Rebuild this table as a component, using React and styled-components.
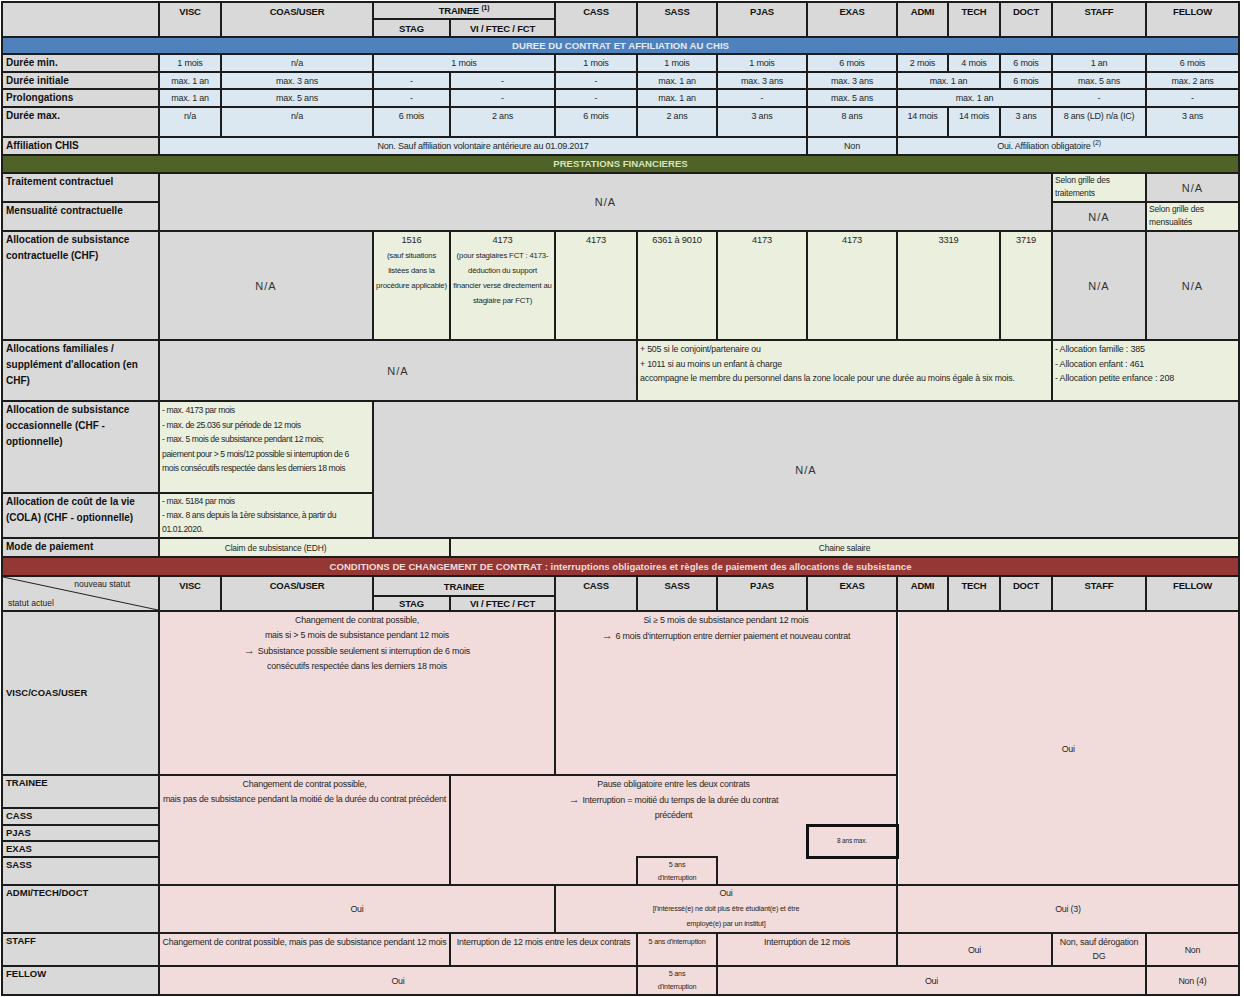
import React from "react";
import styled, { createGlobalStyle } from "styled-components";

const LINE = "#1c1c1c";

const FILL = {
  head: "#d9d9d9",
  blue: "#dbe8f2",
  green: "#ebf0de",
  gray: "#d9d9d9",
  pink: "#f2dcdb",
};

const WIDTHS = [157, 62, 152, 77, 105, 82, 80, 90, 90, 51, 52, 52, 94, 93];

const GlobalStyle = createGlobalStyle`
  html, body { margin: 0; padding: 0; background: #ffffff; }
  body { font-family: "Liberation Sans", Arial, sans-serif; color: #262626; }
`;

const Page = styled.div`
  padding: 1px 0 0 1px;
`;

const Sheet = styled.table`
  border-collapse: collapse;
  table-layout: fixed;
  width: ${WIDTHS.reduce((a, b) => a + b, 0)}px;
`;

const Row = styled.tr`
  height: ${(p) => p.$h}px;
`;

// open sides ("top", or "right:1" for a thinner one) are drawn in the fill colour
// so that merged areas read as one block
const openSides = (p) =>
  (p.$open || [])
    .map((entry) => {
      const [side, width] = entry.split(":");
      return `border-${side}: ${width || 2}px solid ${FILL[p.$bg || "blue"]};`;
    })
    .join("\n");

const Cell = styled.td`
  border: 2px solid ${LINE};
  background: ${(p) => FILL[p.$bg || "blue"]};
  text-align: ${(p) => p.$align || "center"};
  vertical-align: ${(p) => p.$valign || "top"};
  font-size: ${(p) => p.$size || 9}px;
  line-height: ${(p) => p.$lh || 14}px;
  letter-spacing: ${(p) => (p.$tight ? "-0.4px" : "-0.2px")};
  padding: ${(p) => p.$pt ?? 1}px ${(p) => p.$pr ?? 2}px 0 2px;
  white-space: nowrap;
  overflow: hidden;
  ${openSides}
  ${(p) => (p.$box ? `border: 3px solid #111;` : "")}
`;

const Label = styled.th`
  border: 2px solid ${LINE};
  background: ${FILL.head};
  text-align: left;
  vertical-align: ${(p) => p.$valign || "top"};
  font-size: ${(p) => p.$size || 10}px;
  font-weight: bold;
  line-height: ${(p) => p.$lh || 16}px;
  padding: 0 3px;
  color: #111;
  white-space: nowrap;
`;

const Head = styled.th`
  border: 2px solid ${LINE};
  background: ${FILL.head};
  font-size: 9.5px;
  font-weight: bold;
  letter-spacing: -0.2px;
  line-height: 13px;
  vertical-align: ${(p) => p.$valign || "top"};
  padding: ${(p) => (p.$valign === "middle" ? "0 2px" : "2px 2px 0")};
  color: #111;
  white-space: nowrap;
`;

const Band = styled.td`
  border: 2px solid ${LINE};
  background: ${(p) => p.$bg};
  color: ${(p) => p.$fg};
  font-size: 9.6px;
  font-weight: bold;
  text-align: center;
  vertical-align: middle;
  line-height: 14px;
  padding: 0;
`;

const Diag = styled.th`
  border: 2px solid ${LINE};
  padding: 0;
  background: linear-gradient(
      to top right,
      transparent calc(50% - 1px),
      #222 50%,
      transparent calc(50% + 1px)
    ),
    ${FILL.head};
`;

const DiagInner = styled.div`
  box-sizing: border-box;
  height: 33px;
  display: flex;
  flex-direction: column;
  justify-content: space-between;
  font-size: 8.5px;
  line-height: 12px;
  font-weight: normal;
  color: #222;
  padding: 1px 0 1px;
`;

const DiagTop = styled.span`
  align-self: flex-end;
  margin-right: 28px;
`;

const DiagBottom = styled.span`
  align-self: flex-start;
  margin-left: 5px;
`;

const NA = styled.span`
  font-size: 11px;
  letter-spacing: 1px;
  color: #333;
`;

const Sup = styled.sup`
  font-size: 7px;
  line-height: 0;
`;

const Fine = styled.span`
  font-size: ${(p) => p.$size || 7.8}px;
`;

const Big = styled.span`
  font-size: 9.3px;
`;

const Arrow = styled.span`
  font-size: 11px;
  margin-right: 3px;
`;

function HeadRow({ h, first, diag }) {
  const singles = ["CASS", "SASS", "PJAS", "EXAS", "ADMI", "TECH", "DOCT", "STAFF", "FELLOW"];
  return (
    <Row $h={h}>
      {diag ? (
        <Diag rowSpan={2}>
          <DiagInner>
            <DiagTop>nouveau statut</DiagTop>
            <DiagBottom>statut actuel</DiagBottom>
          </DiagInner>
        </Diag>
      ) : (
        <Label rowSpan={2} />
      )}
      <Head rowSpan={2}>VISC</Head>
      <Head rowSpan={2}>COAS/USER</Head>
      <Head colSpan={2} $valign="middle">
        TRAINEE {first && <Sup>(1)</Sup>}
      </Head>
      {singles.map((s) => (
        <Head key={s} rowSpan={2}>
          {s}
        </Head>
      ))}
    </Row>
  );
}

function SubHeadRow({ h }) {
  return (
    <Row $h={h}>
      <Head $valign="middle">STAG</Head>
      <Head $valign="middle">VI / FTEC / FCT</Head>
    </Row>
  );
}

function App() {
  return (
    <Page>
      <GlobalStyle />
      <Sheet>
        <colgroup>
          {WIDTHS.map((w, i) => (
            <col key={i} style={{ width: w }} />
          ))}
        </colgroup>
        <tbody>
          {/* Durée du contrat */}
          <HeadRow h={17} first />
          <SubHeadRow h={18} />
          <Row $h={17}>
            <Band colSpan={14} $bg="#4f81bd" $fg="#e3ecf6">
              DUREE DU CONTRAT ET AFFILIATION AU CHIS
            </Band>
          </Row>
          <Row $h={18}>
            <Label>Durée min.</Label>
            <Cell>1 mois</Cell>
            <Cell>n/a</Cell>
            <Cell colSpan={2}>1 mois</Cell>
            <Cell>1 mois</Cell>
            <Cell>1 mois</Cell>
            <Cell>1 mois</Cell>
            <Cell>6 mois</Cell>
            <Cell>2 mois</Cell>
            <Cell>4 mois</Cell>
            <Cell>6 mois</Cell>
            <Cell>1 an</Cell>
            <Cell>6 mois</Cell>
          </Row>
          <Row $h={17}>
            <Label $lh={15}>Durée initiale</Label>
            <Cell>max. 1 an</Cell>
            <Cell>max. 3 ans</Cell>
            <Cell>-</Cell>
            <Cell>-</Cell>
            <Cell>-</Cell>
            <Cell>max. 1 an</Cell>
            <Cell>max. 3 ans</Cell>
            <Cell>max. 3 ans</Cell>
            <Cell colSpan={2}>max. 1 an</Cell>
            <Cell>6 mois</Cell>
            <Cell>max. 5 ans</Cell>
            <Cell>max. 2 ans</Cell>
          </Row>
          <Row $h={18}>
            <Label>Prolongations</Label>
            <Cell>max. 1 an</Cell>
            <Cell>max. 5 ans</Cell>
            <Cell>-</Cell>
            <Cell>-</Cell>
            <Cell>-</Cell>
            <Cell>max. 1 an</Cell>
            <Cell>-</Cell>
            <Cell>max. 5 ans</Cell>
            <Cell colSpan={3}>max. 1 an</Cell>
            <Cell>-</Cell>
            <Cell>-</Cell>
          </Row>
          <Row $h={30}>
            <Label>Durée max.</Label>
            <Cell>n/a</Cell>
            <Cell>n/a</Cell>
            <Cell>6 mois</Cell>
            <Cell>2 ans</Cell>
            <Cell>6 mois</Cell>
            <Cell>2 ans</Cell>
            <Cell>3 ans</Cell>
            <Cell>8 ans</Cell>
            <Cell>14 mois</Cell>
            <Cell>14 mois</Cell>
            <Cell>3 ans</Cell>
            <Cell>8 ans (LD) n/a (IC)</Cell>
            <Cell>3 ans</Cell>
          </Row>
          <Row $h={18}>
            <Label>Affiliation CHIS</Label>
            <Cell colSpan={7} $valign="middle" $pt={0}>
              Non. Sauf affiliation volontaire antérieure au 01.09.2017
            </Cell>
            <Cell $valign="middle" $pt={0}>Non</Cell>
            <Cell colSpan={5} $valign="middle" $pt={0} $pr={40}>
              Oui. Affiliation obligatoire <Sup>(2)</Sup>
            </Cell>
          </Row>

          {/* Prestations financières */}
          <Row $h={18}>
            <Band colSpan={14} $bg="#4f6228" $fg="#d8e4bc">
              PRESTATIONS FINANCIERES
            </Band>
          </Row>
          <Row $h={29}>
            <Label>Traitement contractuel</Label>
            <Cell colSpan={11} rowSpan={2} $bg="gray" $valign="middle">
              <NA>N/A</NA>
            </Cell>
            <Cell $bg="green" $align="left" $lh={13} $pt={0} $size={8.5}>
              Selon grille des
              <br />
              traitements
            </Cell>
            <Cell $bg="gray" $valign="middle">
              <NA>N/A</NA>
            </Cell>
          </Row>
          <Row $h={29}>
            <Label>Mensualité contractuelle</Label>
            <Cell $bg="gray" $valign="middle">
              <NA>N/A</NA>
            </Cell>
            <Cell $bg="green" $align="left" $lh={13} $pt={0} $size={8.5}>
              Selon grille des
              <br />
              mensualités
            </Cell>
          </Row>
          <Row $h={109}>
            <Label>
              Allocation de subsistance
              <br />
              contractuelle (CHF)
            </Label>
            <Cell colSpan={2} $bg="gray" $valign="middle">
              <NA>N/A</NA>
            </Cell>
            <Cell $bg="green" $lh={15}>
              <Big>1516</Big>
              <br />
              <Fine>(sauf situations</Fine>
              <br />
              <Fine>listées dans la</Fine>
              <br />
              <Fine>procédure applicable)</Fine>
            </Cell>
            <Cell $bg="green" $lh={15}>
              <Big>4173</Big>
              <br />
              <Fine>(pour stagiaires FCT : 4173-</Fine>
              <br />
              <Fine>déduction du support</Fine>
              <br />
              <Fine>financier versé directement au</Fine>
              <br />
              <Fine>stagiaire par FCT)</Fine>
            </Cell>
            <Cell $bg="green" $size={9.3}>4173</Cell>
            <Cell $bg="green" $size={9.3}>6361 à 9010</Cell>
            <Cell $bg="green" $size={9.3}>4173</Cell>
            <Cell $bg="green" $size={9.3}>4173</Cell>
            <Cell colSpan={2} $bg="green" $size={9.3}>3319</Cell>
            <Cell $bg="green" $size={9.3}>3719</Cell>
            <Cell $bg="gray" $valign="middle">
              <NA>N/A</NA>
            </Cell>
            <Cell $bg="gray" $valign="middle">
              <NA>N/A</NA>
            </Cell>
          </Row>
          <Row $h={61}>
            <Label>
              Allocations familiales /
              <br />
              supplément d'allocation (en
              <br />
              CHF)
            </Label>
            <Cell colSpan={5} $bg="gray" $valign="middle">
              <NA>N/A</NA>
            </Cell>
            <Cell colSpan={6} $bg="green" $align="left" $lh={14.5} $size={8.8}>
              + 505 si le conjoint/partenaire ou
              <br />
              + 1011 si au moins un enfant à charge
              <br />
              accompagne le membre du personnel dans la zone locale pour une durée au moins égale à six mois.
            </Cell>
            <Cell colSpan={2} $bg="green" $align="left" $lh={14.5}>
              - Allocation famille : 385
              <br />
              - Allocation enfant : 461
              <br />
              - Allocation petite enfance : 208
            </Cell>
          </Row>
          <Row $h={92}>
            <Label>
              Allocation de subsistance
              <br />
              occasionnelle (CHF -
              <br />
              optionnelle)
            </Label>
            <Cell colSpan={2} $bg="green" $align="left" $lh={14.5} $size={8.6} $tight>
              - max. 4173 par mois
              <br />
              - max. de 25.036 sur période de 12 mois
              <br />
              - max. 5 mois de subsistance pendant 12 mois;
              <br />
              paiement pour &gt; 5 mois/12 possible si interruption de 6
              <br />
              mois consécutifs respectée dans les derniers 18 mois
            </Cell>
            <Cell colSpan={11} rowSpan={2} $bg="gray" $valign="middle">
              <NA>N/A</NA>
            </Cell>
          </Row>
          <Row $h={45}>
            <Label>
              Allocation de coût de la vie
              <br />
              (COLA) (CHF - optionnelle)
            </Label>
            <Cell colSpan={2} $bg="green" $align="left" $lh={14} $pt={0} $size={8.6} $tight>
              - max. 5184 par mois
              <br />
              - max. 8 ans depuis la 1ère subsistance, à partir du
              <br />
              01.01.2020.
            </Cell>
          </Row>
          <Row $h={19}>
            <Label>Mode de paiement</Label>
            <Cell colSpan={3} $bg="green" $valign="middle" $pt={0} $size={8.5} $pr={60}>
              Claim de subsistance (EDH)
            </Cell>
            <Cell colSpan={10} $bg="green" $valign="middle" $pt={0} $size={8.5}>
              Chaine salaire
            </Cell>
          </Row>

          {/* Conditions de changement de contrat */}
          <Row $h={19}>
            <Band colSpan={14} $bg="#953735" $fg="#f2dcdb">
              CONDITIONS DE CHANGEMENT DE CONTRAT : interruptions obligatoires et règles de paiement des allocations de subsistance
            </Band>
          </Row>
          <HeadRow h={20} diag />
          <SubHeadRow h={15} />
          <Row $h={164}>
            <Label $valign="middle" $size={9.5}>VISC/COAS/USER</Label>
            <Cell colSpan={4} $bg="pink" $lh={15} $size={8.9}>
              Changement de contrat possible,
              <br />
              mais si &gt; 5 mois de subsistance pendant 12 mois
              <br />
              <Arrow>→</Arrow>Subsistance possible seulement si interruption de 6 mois
              <br />
              consécutifs respectée dans les derniers 18 mois
            </Cell>
            <Cell colSpan={4} $bg="pink" $lh={15} $size={8.9}>
              Si ≥ 5 mois de subsistance pendant 12 mois
              <br />
              <Arrow>→</Arrow>6 mois d'interruption entre dernier paiement et nouveau contrat
            </Cell>
            <Cell colSpan={5} rowSpan={6} $bg="pink" $valign="middle" $size={8.9}>
              Oui
            </Cell>
          </Row>
          <Row $h={33}>
            <Label $size={9.5} $lh={14}>TRAINEE</Label>
            <Cell colSpan={3} rowSpan={5} $bg="pink" $lh={15} $size={8.9}>
              Changement de contrat possible,
              <br />
              mais pas de subsistance pendant la moitié de la durée du contrat précédent
            </Cell>
            <Cell colSpan={5} rowSpan={2} $bg="pink" $lh={15} $size={8.9} $open={["bottom"]}>
              Pause obligatoire entre les deux contrats
              <br />
              <Arrow>→</Arrow>Interruption = moitié du temps de la durée du contrat
              <br />
              précédent
            </Cell>
          </Row>
          <Row $h={17}>
            <Label $size={9.5} $lh={13}>CASS</Label>
          </Row>
          <Row $h={16}>
            <Label $size={9.5} $lh={13}>PJAS</Label>
            <Cell colSpan={2} rowSpan={3} $bg="pink" $open={["top", "right:1"]} />
            <Cell rowSpan={2} $bg="pink" $open={["top", "left", "right"]} />
            <Cell rowSpan={3} $bg="pink" $open={["top", "left:1", "right:1"]} />
            <Cell rowSpan={2} $bg="pink" $box $valign="middle" $pt={0} $size={6.5} $lh={10}>
              8 ans max.
            </Cell>
          </Row>
          <Row $h={16}>
            <Label $size={9.5} $lh={13}>EXAS</Label>
          </Row>
          <Row $h={28}>
            <Label $size={9.5} $lh={13}>SASS</Label>
            <Cell $bg="pink" $size={7.2} $lh={13} $pt={0}>
              5 ans
              <br />
              d'interruption
            </Cell>
            <Cell $bg="pink" $open={["left"]} />
          </Row>
          <Row $h={47}>
            <Label $size={9.5} $lh={14}>ADMI/TECH/DOCT</Label>
            <Cell colSpan={4} $bg="pink" $valign="middle" $size={8.9}>
              Oui
            </Cell>
            <Cell colSpan={4} $bg="pink" $lh={14.5} $pt={0} $size={8.9}>
              Oui
              <br />
              <Fine $size={7.3}>[l'intéressé(e) ne doit plus être étudiant(e) et être</Fine>
              <br />
              <Fine $size={7.3}>employé(e) par un institut]</Fine>
            </Cell>
            <Cell colSpan={5} $bg="pink" $valign="middle" $size={8.9}>
              Oui (3)
            </Cell>
          </Row>
          <Row $h={33}>
            <Label $size={9.5} $lh={14}>STAFF</Label>
            <Cell colSpan={3} $bg="pink" $size={8.9}>
              Changement de contrat possible, mais pas de subsistance pendant 12 mois
            </Cell>
            <Cell colSpan={2} $bg="pink" $size={8.9}>
              Interruption de 12 mois entre les deux contrats
            </Cell>
            <Cell $bg="pink" $size={7.2}>
              5 ans d'interruption
            </Cell>
            <Cell colSpan={2} $bg="pink" $size={8.9}>
              Interruption de 12 mois
            </Cell>
            <Cell colSpan={3} $bg="pink" $valign="middle" $size={8.9}>
              Oui
            </Cell>
            <Cell $bg="pink" $valign="middle" $lh={14.5} $pt={0} $size={8.9}>
              Non, sauf dérogation
              <br />
              DG
            </Cell>
            <Cell $bg="pink" $valign="middle" $size={8.9}>
              Non
            </Cell>
          </Row>
          <Row $h={29}>
            <Label $size={9.5} $lh={14}>FELLOW</Label>
            <Cell colSpan={5} $bg="pink" $valign="middle" $size={8.9}>
              Oui
            </Cell>
            <Cell $bg="pink" $size={7.2} $lh={13} $pt={0}>
              5 ans
              <br />
              d'interruption
            </Cell>
            <Cell colSpan={6} $bg="pink" $valign="middle" $size={8.9}>
              Oui
            </Cell>
            <Cell $bg="pink" $valign="middle" $size={8.9}>
              Non (4)
            </Cell>
          </Row>
        </tbody>
      </Sheet>
    </Page>
  );
}

export default App;
